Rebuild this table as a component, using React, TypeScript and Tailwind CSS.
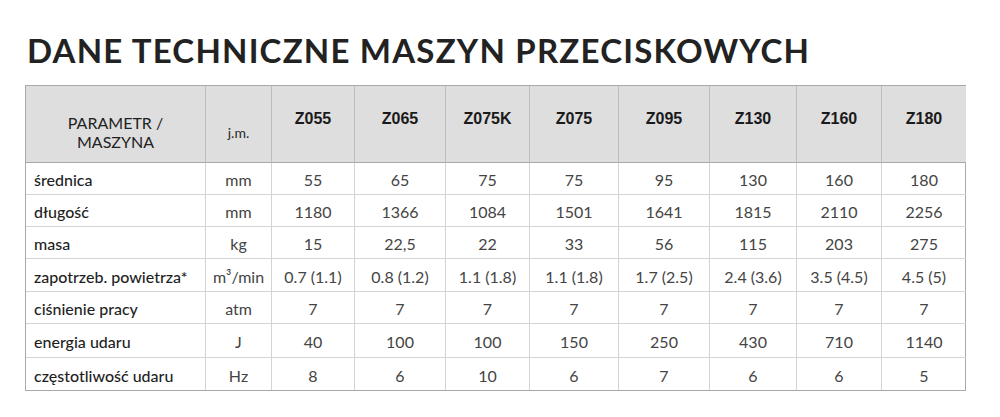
import React from "react";

const models = ["Z055", "Z065", "Z075K", "Z075", "Z095", "Z130", "Z160", "Z180"];
const colW = [180, 66, 83, 91, 84, 89, 91, 87, 85, 84];

const rows: { label: string; unit: string; vals: string[]; h: number }[] = [
  { label: "średnica", unit: "mm", vals: ["55", "65", "75", "75", "95", "130", "160", "180"], h: 32 },
  { label: "długość", unit: "mm", vals: ["1180", "1366", "1084", "1501", "1641", "1815", "2110", "2256"], h: 32 },
  { label: "masa", unit: "kg", vals: ["15", "22,5", "22", "33", "56", "115", "203", "275"], h: 32 },
  {
    label: "zapotrzeb. powietrza*",
    unit: "m³/min",
    vals: ["0.7 (1.1)", "0.8 (1.2)", "1.1 (1.8)", "1.1 (1.8)", "1.7 (2.5)", "2.4 (3.6)", "3.5 (4.5)", "4.5 (5)"],
    h: 33,
  },
  { label: "ciśnienie pracy", unit: "atm", vals: ["7", "7", "7", "7", "7", "7", "7", "7"], h: 32 },
  { label: "energia udaru", unit: "J", vals: ["40", "100", "100", "150", "250", "430", "710", "1140"], h: 34 },
  { label: "częstotliwość udaru", unit: "Hz", vals: ["8", "6", "10", "6", "7", "6", "6", "5"], h: 32 },
];

export default function App() {
  return (
    <div className="w-[1000px] h-[417px] bg-white overflow-hidden" style={{ fontFamily: "Lato, 'Open Sans', sans-serif" }}>
      <h1 className="ml-[27px] mt-[31px] text-[33px] leading-[38px] font-bold text-[#222] tracking-[1.2px]">
        DANE TECHNICZNE MASZYN PRZECISKOWYCH
      </h1>
      <div className="ml-[25px] mt-[16px] w-[941px] border border-[#a9a9a9]">
        <table className="w-full table-fixed border-separate border-spacing-0">
          <colgroup>
            {colW.map((w, i) => (
              <col key={i} style={{ width: w }} />
            ))}
          </colgroup>
          <thead>
            <tr className="h-[77px] bg-[#dedede]">
              <th className="border-r border-b border-[#bdbdbd] border-b-[#a9a9a9] pt-[16px] text-[16px] leading-[19px] font-normal text-[#222] align-middle">
                PARAMETR /<br />MASZYNA
              </th>
              <th className="border-r border-b border-[#bdbdbd] border-b-[#a9a9a9] pt-[16px] text-[14px] font-normal text-[#2a2a2a] align-middle">
                j.m.
              </th>
              {models.map((m, i) => (
                <th
                  key={m}
                  className={`border-b border-b-[#a9a9a9] ${i < models.length - 1 ? "border-r border-[#bdbdbd]" : ""} pb-[10px] text-[16px] font-bold text-[#1a1a1a] align-middle`}
                  style={{ fontFamily: "'Liberation Sans', Arial, sans-serif" }}
                >
                  {m}
                </th>
              ))}
            </tr>
          </thead>
          <tbody>
            {rows.map((r, ri) => {
              const last = ri === rows.length - 1;
              const bb = last ? "" : "border-b";
              return (
                <tr key={r.label} style={{ height: r.h }}>
                  <td className={`${bb} border-r border-[#d4d4d4] pl-[8px] pt-[3px] text-[16px] font-medium text-[#1f1f1f] whitespace-nowrap`}>
                    {r.label}
                  </td>
                  <td className={`${bb} border-r border-[#d4d4d4] pt-[3px] text-center text-[16px] text-[#444] whitespace-nowrap`}>
                    {r.unit}
                  </td>
                  {r.vals.map((v, vi) => (
                    <td
                      key={vi}
                      className={`${bb} ${vi < r.vals.length - 1 ? "border-r" : ""} border-[#d4d4d4] pt-[3px] text-center text-[16px] text-[#444] whitespace-nowrap`}
                    >
                      {v}
                    </td>
                  ))}
                </tr>
              );
            })}
          </tbody>
        </table>
      </div>
    </div>
  );
}
